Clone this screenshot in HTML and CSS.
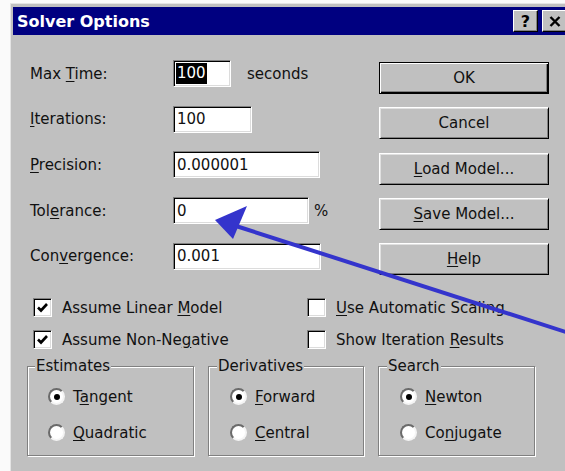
FILE: index.html
```html
<!DOCTYPE html>
<html lang="en">
<head>
<meta charset="utf-8">
<title>Solver Options</title>
<link rel="stylesheet" href="styles.css">
</head>
<body>
<div class="dialog">
  <div class="titlebar">
    <span class="title">Solver Options</span>
    <div class="title-buttons">
      <span class="tbtn help">?</span>
      <span class="tbtn close">
        <svg width="12" height="11" viewBox="0 0 12 11"><path d="M1.5 1 L10.5 10 M10.5 1 L1.5 10" stroke="#000" stroke-width="2.4"/></svg>
      </span>
    </div>
  </div>

  <div class="content">
    <div class="top">
      <div class="form">
        <span class="lbl">Max <u>T</u>ime:</span>
        <div class="cell"><span class="field w-time"><span class="sel">100</span></span><span class="suffix sec">seconds</span></div>

        <span class="lbl"><u>I</u>terations:</span>
        <div class="cell"><span class="field w-iter">100</span></div>

        <span class="lbl"><u>P</u>recision:</span>
        <div class="cell"><span class="field w-prec">0.000001</span></div>

        <span class="lbl">Tol<u>e</u>rance:</span>
        <div class="cell"><span class="field w-tol">0</span><span class="suffix pct">%</span></div>

        <span class="lbl">Con<u>v</u>ergence:</span>
        <div class="cell"><span class="field w-conv">0.001</span></div>
      </div>

      <div class="buttons">
        <span class="btn default">OK</span>
        <span class="btn">Cancel</span>
        <span class="btn"><u>L</u>oad Model...</span>
        <span class="btn"><u>S</u>ave Model...</span>
        <span class="btn"><u>H</u>elp</span>
      </div>
    </div>

    <div class="checks">
      <div class="check"><span class="box"><svg width="13" height="12" viewBox="0 0 13 12"><path d="M2 5.5 L5 8.5 L11 2" fill="none" stroke="#000" stroke-width="2.6"/></svg></span><span>Assume Linear <u>M</u>odel</span></div>
      <div class="check"><span class="box"></span><span><u>U</u>se Automatic Scaling</span></div>
      <div class="check"><span class="box"><svg width="13" height="12" viewBox="0 0 13 12"><path d="M2 5.5 L5 8.5 L11 2" fill="none" stroke="#000" stroke-width="2.6"/></svg></span><span>Assume Non-Ne<u>g</u>ative</span></div>
      <div class="check"><span class="box"></span><span>Show Iteration <u>R</u>esults</span></div>
    </div>

    <div class="groups">
      <fieldset class="group g-est">
        <legend>Estimates</legend>
        <div class="opts">
          <div class="radio"><span class="dot on"></span><span>T<u>a</u>ngent</span></div>
          <div class="radio"><span class="dot"></span><span><u>Q</u>uadratic</span></div>
        </div>
      </fieldset>
      <fieldset class="group g-der">
        <legend>Derivatives</legend>
        <div class="opts">
          <div class="radio"><span class="dot on"></span><span><u>F</u>orward</span></div>
          <div class="radio"><span class="dot"></span><span><u>C</u>entral</span></div>
        </div>
      </fieldset>
      <fieldset class="group g-search">
        <legend>Search</legend>
        <div class="opts">
          <div class="radio"><span class="dot on"></span><span><u>N</u>ewton</span></div>
          <div class="radio"><span class="dot"></span><span>Co<u>n</u>jugate</span></div>
        </div>
      </fieldset>
    </div>
  </div>
</div>

<!-- callout pointing at the Tolerance field -->
<svg class="callout" width="565" height="471" viewBox="0 0 565 471">
  <line x1="236" y1="226" x2="600" y2="343" stroke="#3434cc" stroke-width="4"/>
  <polygon points="215,220 247,206 233,239" fill="#3434cc"/>
</svg>
</body>
</html>
```

FILE: styles.css
```css
html, body {
  margin: 0;
  padding: 0;
  width: 565px;
  height: 471px;
  overflow: hidden;
  background: #fafafa;
}

body {
  position: relative;
  font-family: "DejaVu Sans", "Liberation Sans", sans-serif;
  font-size: 15px;
  color: #111;
}

u {
  text-underline-offset: 2px;
}

/* window frame */
.dialog {
  margin: 3px 0 0 10px;
  width: 557px;
  height: 480px;
  padding: 3px 2px 0 2px;
  border-top: 1px solid #e4e4e4;
  border-left: 1px solid #e4e4e4;
  background: #c0c0c0;
}

.titlebar {
  height: 28px;
  background: #000080;
  display: flex;
  align-items: center;
  justify-content: space-between;
  padding: 0 3px 0 4px;
}

.title {
  color: #fff;
  font-weight: bold;
  font-size: 16px;
}

.title-buttons {
  display: flex;
  gap: 4px;
}

.tbtn {
  width: 25px;
  height: 22px;
  box-sizing: border-box;
  display: flex;
  align-items: center;
  justify-content: center;
  background: #c0c0c0;
  border: 1px solid;
  border-color: #fff #000 #000 #fff;
  box-shadow: inset -1px -1px 0 #808080;
  font-weight: bold;
  font-size: 16px;
  color: #000;
}

/* dialog body */
.content {
  padding: 25px 0 0 17px;
}

.top {
  display: flex;
}

.form {
  width: 349px;
  display: grid;
  grid-template-columns: 143px 1fr;
  grid-auto-rows: 27px;
  row-gap: 18.7px;
  align-items: center;
}

.cell {
  display: flex;
  align-items: center;
  height: 27px;
}

.field {
  box-sizing: border-box;
  height: 27px;
  display: flex;
  align-items: center;
  padding-left: 3px;
  background: #fff;
  border: 1px solid;
  border-color: #808080 #fff #fff #808080;
  box-shadow: inset 1px 1px 0 #000, inset -1px -1px 0 #dcdcdc;
}

.w-time { width: 58px; }
.w-iter { width: 79px; }
.w-prec { width: 147px; }
.w-tol  { width: 136px; }
.w-conv { width: 148px; }

.sel {
  background: #000;
  color: #fff;
  line-height: 21px;
  padding: 0 1px;
  margin-left: -1px;
}

.suffix.sec { margin-left: 16px; }
.suffix.pct { margin-left: 5px; }

.buttons {
  width: 170px;
  margin-top: 2px;
  display: flex;
  flex-direction: column;
  gap: 13.3px;
}

.btn {
  box-sizing: border-box;
  height: 32px;
  display: flex;
  align-items: center;
  justify-content: center;
  background: #c0c0c0;
  border: 1px solid;
  border-color: #fff #000 #000 #fff;
  box-shadow: inset 1px 1px 0 #e0e0e0, inset -1px -1px 0 #808080;
}

.btn.default {
  border-color: #000;
  box-shadow: inset 1px 1px 0 #fff, inset -1px -1px 0 #000, inset -2px -2px 0 #808080;
}

/* check boxes */
.checks {
  margin: 23px 0 0 3px;
  display: grid;
  grid-template-columns: 274px 1fr;
  grid-auto-rows: 19px;
  row-gap: 13px;
}

.check {
  display: flex;
  align-items: center;
  gap: 10px;
}

.box {
  box-sizing: border-box;
  width: 19px;
  height: 19px;
  flex: none;
  display: flex;
  align-items: center;
  justify-content: center;
  background: #fff;
  border: 1px solid;
  border-color: #808080 #fff #fff #808080;
  box-shadow: inset 1px 1px 0 #000, inset -1px -1px 0 #dcdcdc;
}

/* option groups */
.groups {
  margin: 9px 0 0 -3px;
  display: flex;
  gap: 14px;
}

.group {
  margin: 0;
  padding: 0 0 0 20px;
  border: 1px solid #808080;
  box-shadow: inset 1px 1px 0 #fff, 1px 1px 0 #fff;
  min-width: 0;
}

.g-est { width: 167px; box-sizing: border-box; }
.g-der { width: 156px; box-sizing: border-box; padding-left: 21px; }
.g-search { width: 157px; box-sizing: border-box; padding-left: 21px; }

.group legend {
  padding: 0 1px;
  margin-left: -13px;
  background: #c0c0c0;
  line-height: 17px;
}

.opts {
  padding: 11.5px 0 12px;
  display: flex;
  flex-direction: column;
  gap: 16px;
}

.radio {
  height: 20px;
  display: flex;
  align-items: center;
  gap: 8px;
}

.dot {
  box-sizing: border-box;
  width: 17px;
  height: 17px;
  flex: none;
  border-radius: 50%;
  background: #fff;
  border: 2px solid;
  border-color: #6a6a6a #f4f4f4 #f4f4f4 #6a6a6a;
  position: relative;
}

.dot.on::after {
  content: "";
  position: absolute;
  left: 3.5px;
  top: 3.5px;
  width: 6px;
  height: 6px;
  border-radius: 50%;
  background: #000;
}

/* annotation arrow drawn over the dialog */
.callout {
  position: absolute;
  left: 0;
  top: 0;
  pointer-events: none;
}
```
